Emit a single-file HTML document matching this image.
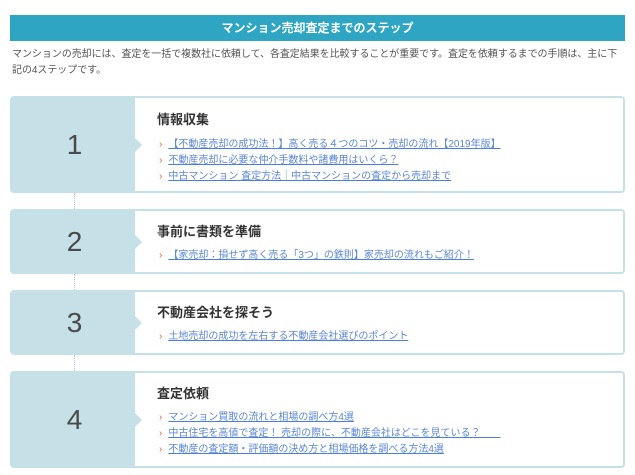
<!DOCTYPE html><html><head><meta charset="utf-8"><style>
body{margin:0;background:#fff;font-family:"Liberation Sans","Noto Sans CJK JP",sans-serif;color:#333;width:635px;height:475px;overflow:hidden;position:relative}
.hd{position:absolute;left:10px;top:15px;width:615px;height:26px;background:#2ea5c2;color:#fff;font-weight:bold;font-size:12px;text-align:center;line-height:26px}
.p{position:absolute;left:12px;top:47px;width:625px;font-size:10px;letter-spacing:-0.05px;line-height:16px;color:#555;white-space:nowrap}
.box{position:absolute;left:10px;width:611px;border:2px solid #c5e0e6;border-radius:4px;background:#fff}
.num{position:absolute;left:0;top:0;bottom:0;width:123px;background:#c5e0e6;display:flex;align-items:center;justify-content:center;font-size:28px;color:#4a4a4a;padding-left:2px;box-sizing:border-box}
.num:after{content:"";position:absolute;right:-7px;top:50%;margin-top:-7px;border-left:7px solid #c5e0e6;border-top:7px solid transparent;border-bottom:7px solid transparent}
.t{position:absolute;left:145px;font-size:13px;font-weight:bold;color:#333}
.l{position:absolute;left:147px;font-size:10px;line-height:16px}
.l div{white-space:nowrap}
.l span.a{color:#e8643c;margin-right:6px;font-size:10px}
.l u{color:#5b86d8;text-decoration:underline;text-decoration-color:#4a7fd8}
.dot{position:absolute;left:74px;width:0;border-left:1px dotted #aaccd6}
</style></head><body>
<div class="hd">マンション売却査定までのステップ</div>
<div class="p">マンションの売却には、査定を一括で複数社に依頼して、各査定結果を比較することが重要です。査定を依頼するまでの手順は、主に下<br>記の4ステップです。</div>
<div class="box" style="top:96px;height:93px"><div class="num">1</div><div class="t" style="top:11px">情報収集</div>
<div class="l" style="top:39px"><div><span class="a">›</span><u>【不動産売却の成功法！】高く売る４つのコツ・売却の流れ【2019年版】</u></div><div><span class="a">›</span><u>不動産売却に必要な仲介手数料や諸費用はいくら？</u></div><div><span class="a">›</span><u>中古マンション 査定方法｜中古マンションの査定から売却まで</u></div></div></div>
<div class="dot" style="top:193px;height:16px"></div>
<div class="box" style="top:209px;height:61px"><div class="num">2</div><div class="t" style="top:10px">事前に書類を準備</div>
<div class="l" style="top:37px"><div><span class="a">›</span><u>【家売却：損せず高く売る「3つ」の鉄則】家売却の流れもご紹介！</u></div></div></div>
<div class="dot" style="top:274px;height:16px"></div>
<div class="box" style="top:290px;height:61px"><div class="num">3</div><div class="t" style="top:10px">不動産会社を探そう</div>
<div class="l" style="top:37px"><div><span class="a">›</span><u>土地売却の成功を左右する不動産会社選びのポイント</u></div></div></div>
<div class="dot" style="top:355px;height:16px"></div>
<div class="box" style="top:371px;height:93px"><div class="num">4</div><div class="t" style="top:10px">査定依頼</div>
<div class="l" style="top:37px"><div><span class="a">›</span><u>マンション買取の流れと相場の調べ方4選</u></div><div><span class="a">›</span><u>中古住宅を高値で査定！ 売却の際に、不動産会社はどこを見ている？　　</u></div><div><span class="a">›</span><u>不動産の査定額・評価額の決め方と相場価格を調べる方法4選</u></div></div></div>
</body></html>
